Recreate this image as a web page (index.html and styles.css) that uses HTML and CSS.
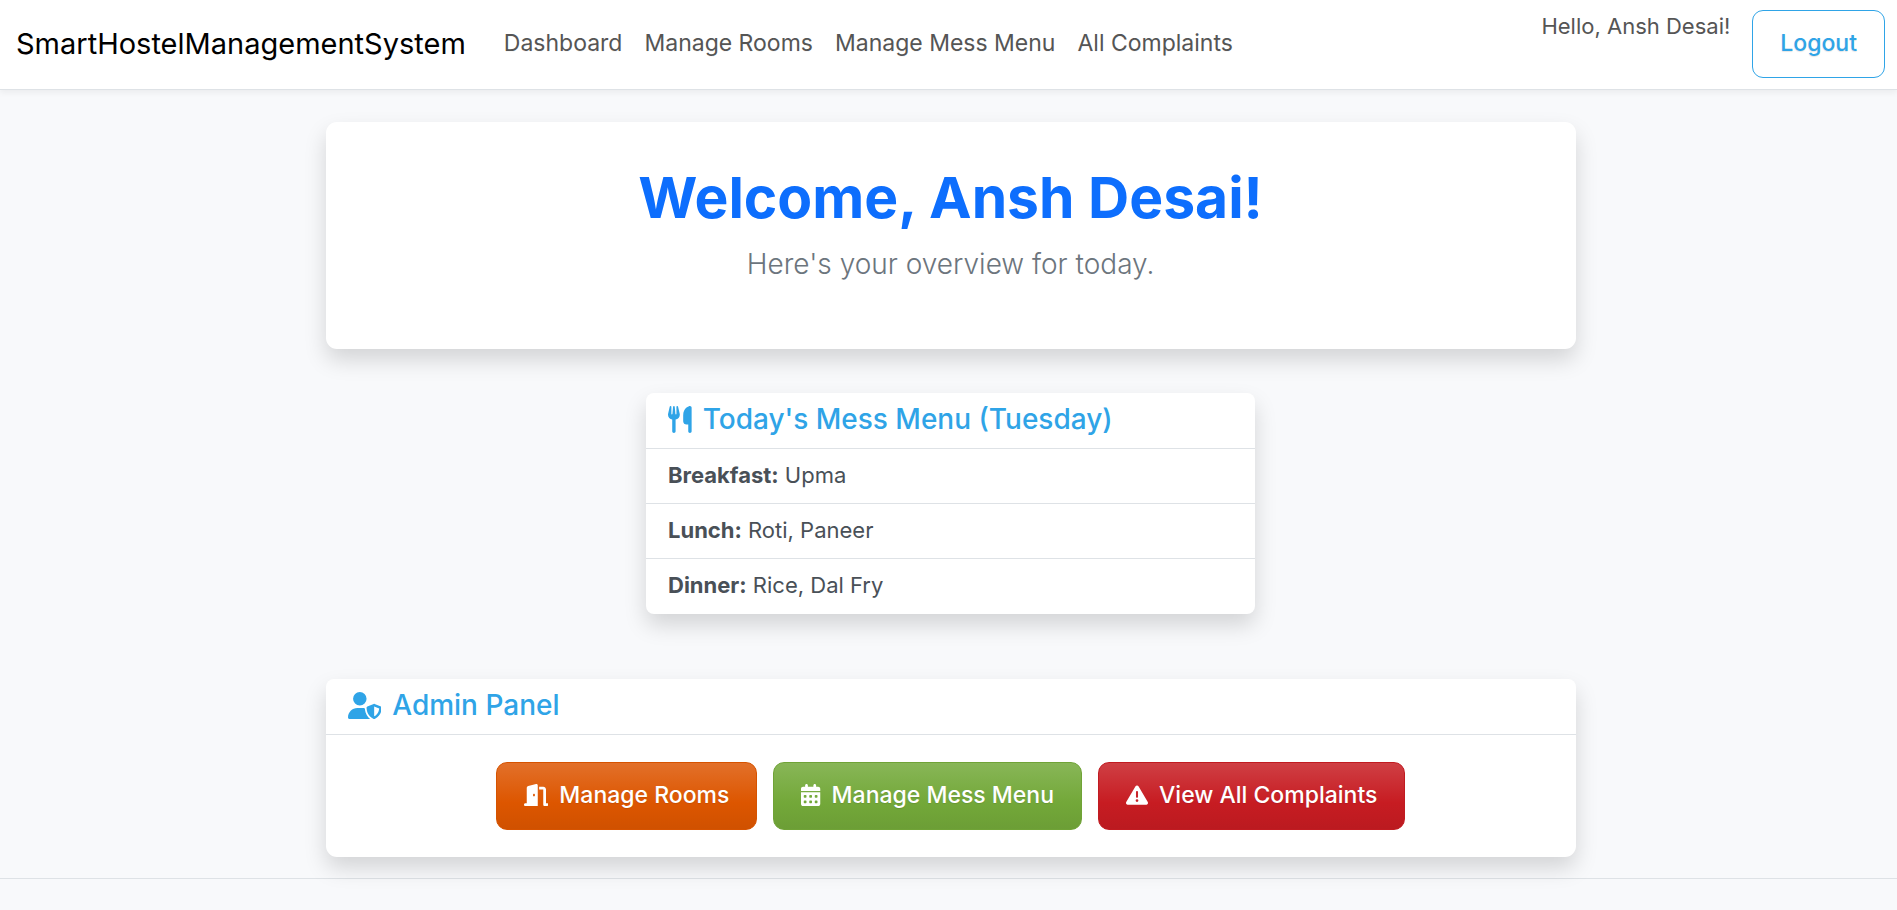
FILE: index.html
```html
<!DOCTYPE html>
<html lang="en">
<head>
<meta charset="utf-8">
<meta name="viewport" content="width=device-width, initial-scale=1">
<title>Dashboard - SmartHostelManagementSystem</title>
<link rel="stylesheet" href="styles.css">
</head>
<body>
<header class="navbar">
  <a class="brand" href="#">SmartHostelManagementSystem</a>
  <nav class="nav">
    <a class="nav-link" href="#">Dashboard</a>
    <a class="nav-link" href="#">Manage Rooms</a>
    <a class="nav-link" href="#">Manage Mess Menu</a>
    <a class="nav-link" href="#">All Complaints</a>
  </nav>
  <div class="account">
    <span class="greeting">Hello, Ansh Desai!</span>
    <button class="btn btn-outline" type="button">Logout</button>
  </div>
</header>
<main class="page">
  <section class="card welcome">
    <h1 class="welcome-title">Welcome, Ansh Desai!</h1>
    <p class="welcome-text">Here's your overview for today.</p>
  </section>
  <section class="card menu">
    <h2 class="card-header"><svg class="icon" viewBox="0 0 448 512" aria-hidden="true"><path d="M416 0C400 0 288 32 288 176V288c0 35.300 28.700 64 64 64h32V480c0 17.700 14.300 32 32 32s32-14.300 32-32V352 240 32c0-17.700-14.300-32-32-32zM64 16C64 7.800 57.900 1 49.700 .1S34.200 4.600 32.400 12.500L2.100 148.800C.7 155.100 0 161.500 0 167.900c0 45.900 35.100 83.600 80 87.700V480c0 17.700 14.300 32 32 32s32-14.300 32-32V255.600c44.900-4.100 80-41.800 80-87.700c0-6.400-.7-12.800-2.100-19.100L191.600 12.500c-1.800-8-9.300-13.300-17.400-12.400S160 7.800 160 16V150.200c0 5.400-4.400 9.800-9.800 9.800c-5.100 0-9.300-3.900-9.800-9L127.900 14.600C127.200 6.300 120.300 0 112 0s-15.200 6.300-15.900 14.600L83.700 151c-.5 5.100-4.700 9-9.800 9c-5.400 0-9.800-4.400-9.800-9.800V16z"/></svg>Today's Mess Menu (Tuesday)</h2>
    <ul class="meals">
      <li class="meal"><strong>Breakfast:</strong> Upma</li>
      <li class="meal"><strong>Lunch:</strong> Roti, Paneer</li>
      <li class="meal"><strong>Dinner:</strong> Rice, Dal Fry</li>
    </ul>
  </section>
  <section class="card admin">
    <h2 class="card-header"><svg class="icon" viewBox="0 0 640 512" aria-hidden="true"><path d="M224 256A128 128 0 1 0 224 0a128 128 0 1 0 0 256zm-45.700 48C79.800 304 0 383.800 0 482.300C0 498.700 13.300 512 29.700 512H418.300c1.800 0 3.500-.2 5.300-.5c-76.300-55.100-99.800-141-103.100-200.200c-16.100-4.800-33.100-7.300-50.700-7.300H178.300zm308.800-78.300l-120 48C358 277.400 352 286.200 352 296c0 63.300 25.900 168.800 134.800 214.200c5.900 2.500 12.600 2.500 18.500 0C614.100 464.800 640 359.300 640 296c0-9.800-6-18.600-15.100-22.300l-120-48c-5.700-2.300-12.100-2.300-17.800 0zM591.400 312c-3.900 50.700-27.200 116.700-95.400 149.700V273.800L591.400 312z"/></svg>Admin Panel</h2>
    <div class="actions">
      <a class="btn btn-rooms" href="#"><svg class="icon" viewBox="0 0 576 512" aria-hidden="true"><path d="M320 32c0-9.900-4.500-19.200-12.300-25.200S289.800-1.400 280.200 1l-179.900 45C79 51.300 64 70.500 64 92.500V448H32c-17.700 0-32 14.300-32 32s14.300 32 32 32H96 288h32V480 32zM256 256c0 17.700-10.700 32-24 32s-24-14.300-24-32s10.700-32 24-32s24 14.300 24 32zm96-128h96V480c0 17.700 14.300 32 32 32h64c17.700 0 32-14.300 32-32s-14.300-32-32-32H512V128c0-35.300-28.700-64-64-64H352v64z"/></svg>Manage Rooms</a>
      <a class="btn btn-menu" href="#"><svg class="icon" viewBox="0 0 448 512" aria-hidden="true"><path d="M128 0c17.700 0 32 14.300 32 32V64H288V32c0-17.700 14.300-32 32-32s32 14.300 32 32V64h48c26.500 0 48 21.500 48 48v48H0V112C0 85.500 21.500 64 48 64H96V32c0-17.700 14.300-32 32-32zM0 192H448V464c0 26.500-21.500 48-48 48H48c-26.500 0-48-21.500-48-48V192zm64 80v32c0 8.800 7.200 16 16 16h32c8.800 0 16-7.200 16-16V272c0-8.800-7.200-16-16-16H80c-8.800 0-16 7.200-16 16zm128 0v32c0 8.800 7.200 16 16 16h32c8.800 0 16-7.200 16-16V272c0-8.800-7.200-16-16-16H208c-8.800 0-16 7.200-16 16zm144-16c-8.800 0-16 7.200-16 16v32c0 8.800 7.200 16 16 16h32c8.800 0 16-7.200 16-16V272c0-8.800-7.200-16-16-16H336zM64 400v32c0 8.800 7.200 16 16 16h32c8.800 0 16-7.200 16-16V400c0-8.800-7.200-16-16-16H80c-8.800 0-16 7.200-16 16zm144-16c-8.800 0-16 7.200-16 16v32c0 8.800 7.200 16 16 16h32c8.800 0 16-7.200 16-16V400c0-8.800-7.200-16-16-16H208zm112 16v32c0 8.800 7.200 16 16 16h32c8.800 0 16-7.200 16-16V400c0-8.800-7.200-16-16-16H336c-8.800 0-16 7.200-16 16z"/></svg>Manage Mess Menu</a>
      <a class="btn btn-complaints" href="#"><svg class="icon" viewBox="0 0 512 512" aria-hidden="true"><path d="M256 32c14.200 0 27.300 7.500 34.500 19.800l216 368c7.300 12.400 7.300 27.700 .2 40.100S486.300 480 472 480H40c-14.300 0-27.600-7.700-34.700-20.100s-7-27.800 .2-40.100l216-368C228.700 39.500 241.800 32 256 32zm0 128c-13.300 0-24 10.700-24 24V296c0 13.300 10.700 24 24 24s24-10.700 24-24V184c0-13.300-10.700-24-24-24zm32 224a32 32 0 1 0 -64 0 32 32 0 1 0 64 0z"/></svg>View All Complaints</a>
    </div>
  </section>
</main>
<footer class="footer"></footer>
</body>
</html>
```

FILE: styles.css
```css
* { box-sizing: border-box; }

body {
  margin: 0;
  background: #f8f9fb;
  color: #495057;
  font: 400 22px/32px Inter, "Open Sans", sans-serif;
}

h1, h2, p, ul { margin: 0; padding: 0; }
a { color: inherit; text-decoration: none; }

.navbar {
  display: flex;
  align-items: center;
  padding: 10px 12px 11px 16px;
  background: #fff;
  border-bottom: 1px solid #dee2e6;
  box-shadow: 0 3px 6px rgba(0, 0, 0, .05);
}
.brand { margin-right: 27px; color: #000; font-size: 29px; }
.nav { display: flex; flex: 1; padding-bottom: 3px; font-size: 23px; }
.nav-link { padding: 0 11px; color: #555; text-shadow: 0 1px 0 rgba(0, 0, 0, .05); }
.account { display: flex; align-items: flex-start; gap: 22px; }
.greeting { color: #555; }

.btn {
  display: inline-flex;
  align-items: center;
  gap: 11px;
  padding: 16px 27px 18px;
  border: 1px solid;
  border-radius: 11px;
  font: 500 23px/32px Inter, "Open Sans", sans-serif;
  text-shadow: 0 1px 1px rgba(0, 0, 0, .1);
}
.btn-outline { background: transparent; border-color: #2fa4e7; color: #2fa4e7; cursor: pointer; }
.btn-rooms, .btn-menu, .btn-complaints { color: #fff; }
.btn-rooms { background: linear-gradient(#e2702a, #dd5600 60%, #d05100); border-color: #d65300; }
.btn-menu { background: linear-gradient(#88b657, #73a839 60%, #6c9e36); border-color: #70a337; }
.btn-complaints { background: linear-gradient(#cf3f44, #c71c22 60%, #bb1a20); border-color: #c11b21; }

.icon { height: 22px; fill: currentColor; flex: none; }
.card-header .icon { height: 27px; }

.page {
  display: flex;
  flex-direction: column;
  align-items: center;
  padding: 32px 12px 21px 16px;
}
.card {
  width: 100%;
  max-width: 1250px;
  background: #fff;
  border-radius: 8px;
  box-shadow: 0 11px 22px rgba(0, 0, 0, .15);
}
.welcome { padding: 44px; border-radius: 11px; text-align: center; }
.welcome-title { margin-bottom: 15px; color: #0d6efd; font-size: 57px; font-weight: 700; line-height: 63px; }
.welcome-text { margin-bottom: 20px; color: #6c757d; font-size: 28px; font-weight: 300; line-height: 41px; }
.menu { max-width: 609px; margin-top: 44px; }
.admin { margin-top: 65px; border-radius: 8px 8px 11px 11px; }

.card-header {
  display: flex;
  align-items: center;
  gap: 11px;
  padding: 10px 22px 12px;
  border-bottom: 1px solid #dee2e6;
  color: #2fa4e7;
  font-size: 28px;
  font-weight: 500;
  line-height: 33px;
}
.meals { list-style: none; }
.meal { padding: 10px 22px 12px; border-bottom: 1px solid #dee2e6; }
.meal:last-child { border-bottom-color: transparent; }

.actions {
  display: flex;
  flex-wrap: wrap;
  justify-content: center;
  gap: 16px;
  padding: 27px 22px;
}
.footer { min-height: 31px; border-top: 1px solid #dee2e6; }
```
